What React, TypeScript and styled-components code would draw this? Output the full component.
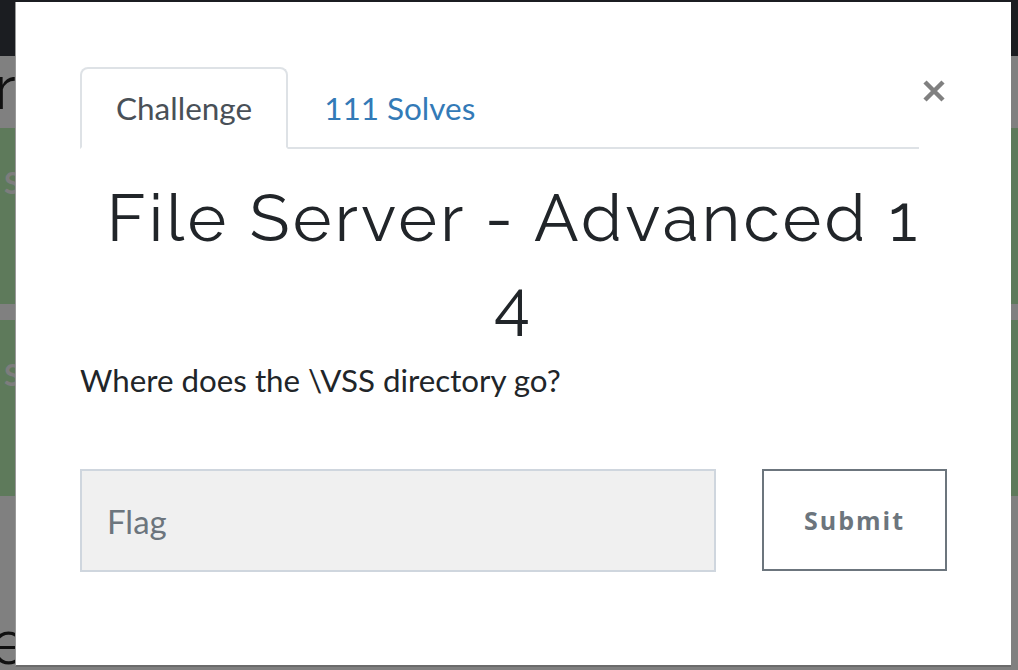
import React from "react";
import styled, { createGlobalStyle } from "styled-components";

const Global = createGlobalStyle`
  html, body { margin: 0; padding: 0; }
  body { width: 1018px; height: 670px; overflow: hidden; background: #808080; font-family: Lato, "Open Sans", sans-serif; }
`;

const Page = styled.div`
  position: relative;
  width: 1018px;
  height: 670px;
  background: #808080;
  overflow: hidden;
`;

const NavBar = styled.div`
  height: 56px;
  background: #1b1d21;
`;

const Heading = styled.div`
  height: 72px;
  font-family: Raleway, Lato, sans-serif;
  font-size: 62px;
  line-height: 64px;
  color: #111;
  margin-left: -6px;
`;

const CardGrid = styled.div`
  display: flex;
  flex-direction: column;
  gap: 16px;
`;

const Card = styled.div`
  height: 176px;
  background: #5e7a5b;
  color: #7d7d7d;
  font-family: Lato, sans-serif;
  font-weight: 700;
  font-size: 30px;
  padding: 36px 0 0 4px;
  box-sizing: border-box;
`;

const BottomWord = styled.div`
  font-family: Raleway, Lato, sans-serif;
  font-size: 62px;
  color: #111;
  margin-top: 110px;
  margin-left: -10px;
`;

const Modal = styled.div`
  position: absolute;
  left: 15px;
  top: 2px;
  width: 996px;
  height: 665px;
  box-sizing: border-box;
  background: #fff;
  border-left: 1px solid #9a9a9a;
  border-bottom: 2px solid #6b6b6b;
  padding: 65px 64px 0 64px;
  display: flex;
  flex-direction: column;
`;

const HeaderRow = styled.div`
  display: flex;
  align-items: flex-start;
`;

const Tabs = styled.div`
  flex: 1;
  display: flex;
  border-bottom: 2px solid #dee2e6;
`;

const Tab = styled.div<{ $active?: boolean }>`
  height: 82px;
  box-sizing: border-box;
  padding: 0 34px;
  display: flex;
  align-items: center;
  font-family: Lato, sans-serif;
  font-size: 31.5px;
  margin-bottom: -2px;
  color: ${(p) => (p.$active ? "#495057" : "#337ab7")};
  background: ${(p) => (p.$active ? "#fff" : "transparent")};
  border: 2px solid ${(p) => (p.$active ? "#dee2e6" : "transparent")};
  border-bottom-color: ${(p) => (p.$active ? "#fff" : "transparent")};
  border-radius: 8px 8px 0 0;
`;

const Close = styled.div`
  width: 27px;
  display: flex;
  justify-content: center;
  margin-top: 12px;
  margin-left: 1px;
`;

const Title = styled.h2`
  margin: 26px 0 0;
  text-align: center;
  font-family: Raleway, Lato, sans-serif;
  font-weight: 400;
  font-size: 66px;
  line-height: 86px;
  letter-spacing: 3.2px;
  color: #212529;
`;

const Description = styled.p`
  margin: 15px 0 0;
  font-family: Lato, sans-serif;
  font-size: 31.3px;
  line-height: 37px;
  color: #212529;
`;

const FormRow = styled.div`
  display: flex;
  gap: 46px;
  margin-top: 70px;
`;

const Input = styled.div`
  width: 636px;
  flex-shrink: 0;
  height: 103px;
  box-sizing: border-box;
  background: #f0f0f0;
  border: 2px solid #cfd6de;
  display: flex;
  align-items: center;
  padding-left: 25px;
  font-family: Lato, sans-serif;
  font-size: 33px;
  color: #6c757d;
`;

const Button = styled.div`
  width: 185px;
  flex-shrink: 0;
  height: 102px;
  box-sizing: border-box;
  border: 2px solid #6c757d;
  display: flex;
  align-items: center;
  justify-content: center;
  font-family: "Open Sans", Lato, sans-serif;
  font-weight: 700;
  font-size: 25px;
  letter-spacing: 2px;
  color: #6c757d;
`;

export default function App() {
  return (
    <Page>
      <Global />
      <NavBar />
      <Heading>r</Heading>
      <CardGrid>
        <Card>S</Card>
        <Card>S</Card>
      </CardGrid>
      <BottomWord>e</BottomWord>
      <Modal>
        <HeaderRow>
          <Tabs>
            <Tab $active>Challenge</Tab>
            <Tab>111 Solves</Tab>
          </Tabs>
          <Close>
            <svg width="24" height="24" viewBox="0 0 24 24">
              <path d="M3 3 L21 21 M21 3 L3 21" stroke="#808080" strokeWidth="4.5" />
            </svg>
          </Close>
        </HeaderRow>
        <Title>File Server - Advanced 1 4</Title>
        <Description>Where does the \VSS directory go?</Description>
        <FormRow>
          <Input>Flag</Input>
          <Button>Submit</Button>
        </FormRow>
      </Modal>
    </Page>
  );
}
